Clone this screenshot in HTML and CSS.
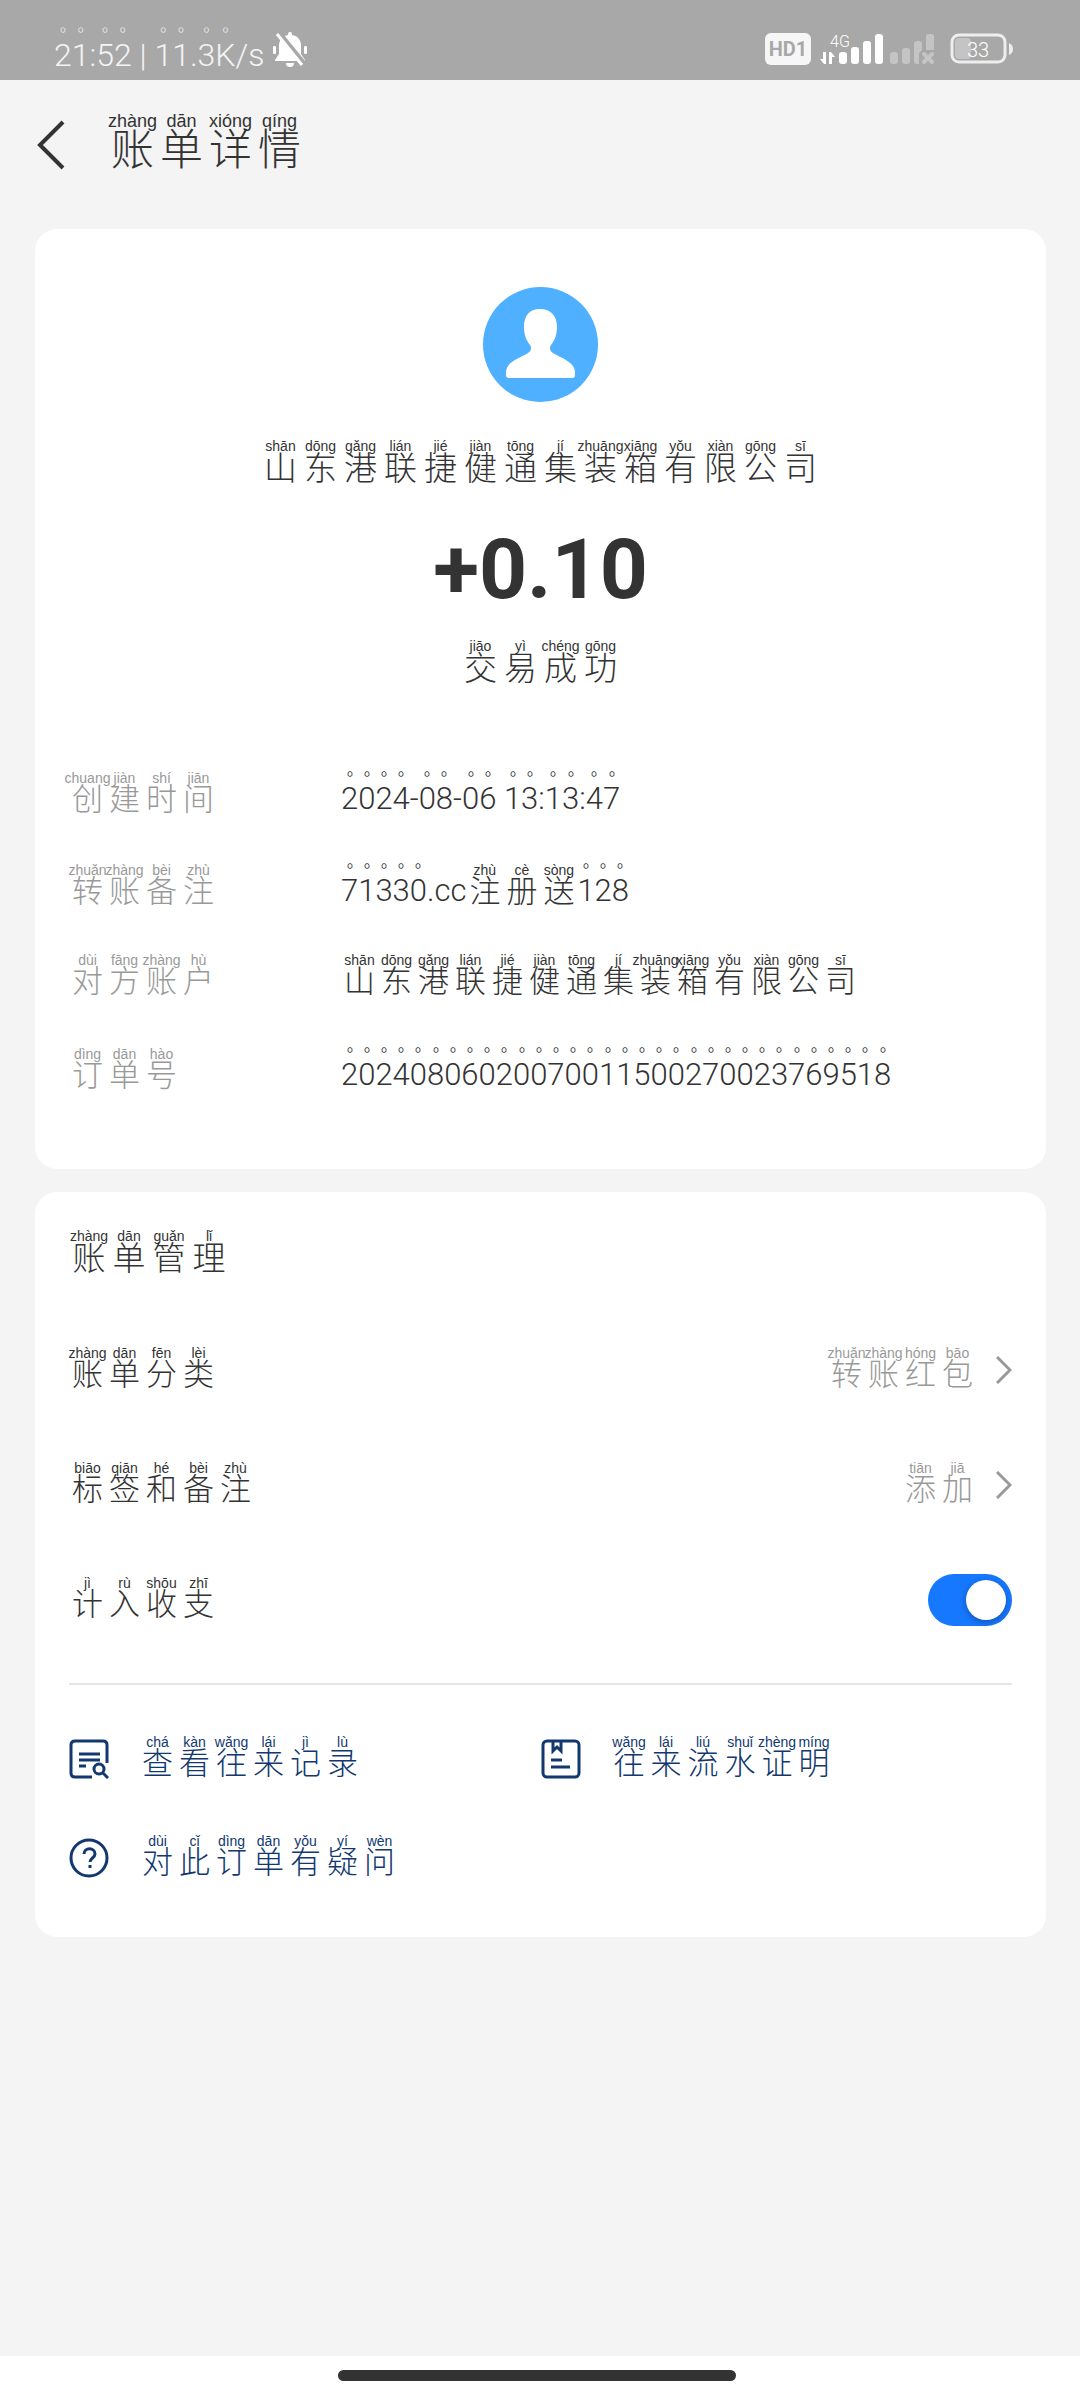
FILE: index.html
```
<!DOCTYPE html>
<html lang="zh-CN">
<head>
  <meta charset="UTF-8">
  <meta name="viewport" content="width=device-width, initial-scale=1.0">
  <title>账单详情</title>
  <link rel="stylesheet" href="styles.css">
</head>
<body>
  <div class="status-bar">
    <div class="status-left">
      <span class="status-text"><span class="num">21</span>:<span class="num">52</span> | <span class="num">11</span>.<span class="num">3K</span>/s</span>
      <svg class="icon-bell" width="36" height="36" viewBox="0 0 36 36" fill="#fff">
        <path d="M18 1a2 2 0 0 1 2 2v1c6 1 9 5 9 11v8l4 6v1H3v-1l4-6v-8C7 9 10 5 16 4V3a2 2 0 0 1 2-2z"/>
        <path d="M14 32h8a4 4 0 0 1-8 0z"/>
        <rect x="1" y="15" width="3" height="8" rx="1"/>
        <rect x="32" y="15" width="3" height="8" rx="1"/>
        <path d="M7 1l26 32" stroke="#a8a8a8" stroke-width="4"/>
        <path d="M5 3l25 31" stroke="#fff" stroke-width="3"/>
      </svg>
    </div>
    <div class="status-right">
      <span class="hd-badge">HD1</span>
      <svg class="icon-signal" width="116" height="34" viewBox="0 0 116 34" fill="#fff">
        <text class="net-type" x="10" y="15">4G</text>
        <path d="M6 20v12H4l-4-5h3v-7zM9 32V20h2l4 5h-3v7z"/>
        <rect x="19" y="20" width="8" height="12" rx="3"/>
        <rect x="31" y="15" width="8" height="17" rx="3"/>
        <rect x="43" y="9" width="8" height="23" rx="3"/>
        <rect x="55" y="2" width="8" height="30" rx="3"/>
        <g fill="#c4c4c4">
          <rect x="70" y="20" width="8" height="12" rx="3"/>
          <rect x="82" y="16" width="8" height="16" rx="3"/>
          <path d="M94 12a3 3 0 0 1 3-3h2a3 3 0 0 1 3 3v6l-3 3v11h-2a3 3 0 0 1-3-3z"/>
          <path d="M106 5a3 3 0 0 1 3-3h2a3 3 0 0 1 3 3v13h-8z"/>
        </g>
        <path d="M104 22l8 8M112 22l-8 8" stroke="#c4c4c4" stroke-width="4" stroke-linecap="round"/>
      </svg>
      <svg class="icon-battery" width="64" height="32" viewBox="0 0 64 32">
        <rect x="2" y="2" width="53" height="27" rx="7" fill="none" stroke="#eee" stroke-width="3"/>
        <rect x="5" y="5" width="16" height="21" rx="4" fill="#c4c4c4"/>
        <path d="M59 10q4 2 4 6t-4 6z" fill="#eee"/>
        <text class="battery-text" x="28" y="24" text-anchor="middle">33</text>
      </svg>
    </div>
  </div>

  <header class="header">
    <a class="back" href="#" aria-label="返回">
      <svg width="30" height="50" viewBox="0 0 30 50" fill="none" stroke="#333" stroke-width="4">
        <path d="M27 2L4 25l23 23"/>
      </svg>
    </a>
    <h1 class="py py-title"><ruby>账<rt>zhàng</rt></ruby><ruby>单<rt>dān</rt></ruby><ruby>详<rt>xióng</rt></ruby><ruby>情<rt>qíng</rt></ruby></h1>
  </header>

  <main>
    <section class="card summary">
      <svg class="avatar" width="115" height="115" viewBox="0 0 115 115">
        <circle cx="57.5" cy="57.5" r="57.5" fill="#4eb0ff"/>
        <path fill="#fff" d="M57 22c11 0 17 7 17 18 0 9-3 14-6 18-2 3-1 6 2 8 8 5 22 9 22 19v3q0 3-3 3H26q-3 0-3-3v-3c0-10 14-14 22-19 3-2 4-5 2-8-3-4-6-9-6-18 0-11 5-18 16-18z"/>
      </svg>
      <div class="py py-large payee"><ruby>山<rt>shān</rt></ruby><ruby>东<rt>dōng</rt></ruby><ruby>港<rt>gǎng</rt></ruby><ruby>联<rt>lián</rt></ruby><ruby>捷<rt>jié</rt></ruby><ruby>健<rt>jiàn</rt></ruby><ruby>通<rt>tōng</rt></ruby><ruby>集<rt>jí</rt></ruby><ruby>装<rt>zhuāng</rt></ruby><ruby>箱<rt>xiāng</rt></ruby><ruby>有<rt>yǒu</rt></ruby><ruby>限<rt>xiàn</rt></ruby><ruby>公<rt>gōng</rt></ruby><ruby>司<rt>sī</rt></ruby></div>
      <div class="amount">+0.10</div>
      <div class="py py-large state"><ruby>交<rt>jiāo</rt></ruby><ruby>易<rt>yì</rt></ruby><ruby>成<rt>chéng</rt></ruby><ruby>功<rt>gōng</rt></ruby></div>

      <dl class="details">
        <div class="detail">
          <dt class="py"><ruby>创<rt>chuang</rt></ruby><ruby>建<rt>jiàn</rt></ruby><ruby>时<rt>shí</rt></ruby><ruby>间<rt>jiān</rt></ruby></dt>
          <dd class="py"><span class="digits"><span class="num">2024</span>-<span class="num">08</span>-<span class="num">06</span> <span class="num">13</span>:<span class="num">13</span>:<span class="num">47</span></span></dd>
        </div>
        <div class="detail">
          <dt class="py"><ruby>转<rt>zhuǎn</rt></ruby><ruby>账<rt>zhàng</rt></ruby><ruby>备<rt>bèi</rt></ruby><ruby>注<rt>zhù</rt></ruby></dt>
          <dd class="py"><span class="digits"><span class="num">71330</span>.cc</span><ruby>注<rt>zhù</rt></ruby><ruby>册<rt>cè</rt></ruby><ruby>送<rt>sòng</rt></ruby><span class="digits num">128</span></dd>
        </div>
        <div class="detail">
          <dt class="py"><ruby>对<rt>dùi</rt></ruby><ruby>方<rt>fāng</rt></ruby><ruby>账<rt>zhàng</rt></ruby><ruby>户<rt>hù</rt></ruby></dt>
          <dd class="py"><ruby>山<rt>shān</rt></ruby><ruby>东<rt>dōng</rt></ruby><ruby>港<rt>gǎng</rt></ruby><ruby>联<rt>lián</rt></ruby><ruby>捷<rt>jié</rt></ruby><ruby>健<rt>jiàn</rt></ruby><ruby>通<rt>tōng</rt></ruby><ruby>集<rt>jí</rt></ruby><ruby>装<rt>zhuāng</rt></ruby><ruby>箱<rt>xiāng</rt></ruby><ruby>有<rt>yǒu</rt></ruby><ruby>限<rt>xiàn</rt></ruby><ruby>公<rt>gōng</rt></ruby><ruby>司<rt>sī</rt></ruby></dd>
        </div>
        <div class="detail">
          <dt class="py"><ruby>订<rt>dìng</rt></ruby><ruby>单<rt>dān</rt></ruby><ruby>号<rt>hào</rt></ruby></dt>
          <dd class="py"><span class="digits num">20240806020070011500270023769518</span></dd>
        </div>
      </dl>
    </section>

    <section class="card manage">
      <h2 class="py py-large"><ruby>账<rt>zhàng</rt></ruby><ruby>单<rt>dān</rt></ruby><ruby>管<rt>guǎn</rt></ruby><ruby>理<rt>lǐ</rt></ruby></h2>
      <div class="rows">
        <a class="row" href="#">
          <span class="py"><ruby>账<rt>zhàng</rt></ruby><ruby>单<rt>dān</rt></ruby><ruby>分<rt>fēn</rt></ruby><ruby>类<rt>lèi</rt></ruby></span>
          <span class="row-value">
            <span class="py"><ruby>转<rt>zhuǎn</rt></ruby><ruby>账<rt>zhàng</rt></ruby><ruby>红<rt>hóng</rt></ruby><ruby>包<rt>bāo</rt></ruby></span>
            <svg width="16" height="28" viewBox="0 0 16 28" fill="none" stroke="#999" stroke-width="3"><path d="M1 1l13 13L1 27"/></svg>
          </span>
        </a>
        <a class="row" href="#">
          <span class="py"><ruby>标<rt>biāo</rt></ruby><ruby>签<rt>qiān</rt></ruby><ruby>和<rt>hé</rt></ruby><ruby>备<rt>bèi</rt></ruby><ruby>注<rt>zhù</rt></ruby></span>
          <span class="row-value">
            <span class="py"><ruby>添<rt>tiān</rt></ruby><ruby>加<rt>jiā</rt></ruby></span>
            <svg width="16" height="28" viewBox="0 0 16 28" fill="none" stroke="#999" stroke-width="3"><path d="M1 1l13 13L1 27"/></svg>
          </span>
        </a>
        <div class="row">
          <label class="py" for="countIn"><ruby>计<rt>jì</rt></ruby><ruby>入<rt>rù</rt></ruby><ruby>收<rt>shōu</rt></ruby><ruby>支<rt>zhī</rt></ruby></label>
          <input class="switch" type="checkbox" id="countIn" checked>
        </div>
      </div>
      <nav class="actions">
        <a class="action" href="#">
          <svg width="40" height="40" viewBox="0 0 40 40" fill="none" stroke="#12386f" stroke-width="3">
            <path d="M23 38H6q-4 0-4-4V6q0-4 4-4h28q4 0 4 4v18M10 15h21M10 21h21M10 27h7"/>
            <circle cx="30" cy="30" r="5"/>
            <path d="M34 34l5 5"/>
          </svg>
          <span class="py"><ruby>查<rt>chá</rt></ruby><ruby>看<rt>kàn</rt></ruby><ruby>往<rt>wǎng</rt></ruby><ruby>来<rt>lái</rt></ruby><ruby>记<rt>jì</rt></ruby><ruby>录<rt>lù</rt></ruby></span>
        </a>
        <a class="action" href="#">
          <svg width="40" height="40" viewBox="0 0 40 40" fill="none" stroke="#12386f" stroke-width="3">
            <rect x="2" y="2" width="36" height="36" rx="4"/>
            <path d="M12 2v10l4-4 4 4V2M10 21h11M10 28h19"/>
          </svg>
          <span class="py"><ruby>往<rt>wǎng</rt></ruby><ruby>来<rt>lái</rt></ruby><ruby>流<rt>liú</rt></ruby><ruby>水<rt>shuǐ</rt></ruby><ruby>证<rt>zhèng</rt></ruby><ruby>明<rt>míng</rt></ruby></span>
        </a>
        <a class="action" href="#">
          <svg width="40" height="40" viewBox="0 0 40 40" fill="none" stroke="#12386f" stroke-width="3">
            <circle cx="20" cy="20" r="18"/>
            <path d="M15 16c0-7 11-7 11 0 0 4-5 4-5 8M21 27v3"/>
          </svg>
          <span class="py"><ruby>对<rt>dùi</rt></ruby><ruby>此<rt>cǐ</rt></ruby><ruby>订<rt>dìng</rt></ruby><ruby>单<rt>dān</rt></ruby><ruby>有<rt>yǒu</rt></ruby><ruby>疑<rt>yí</rt></ruby><ruby>问<rt>wèn</rt></ruby></span>
        </a>
      </nav>
    </section>
  </main>

  <footer class="home-bar"><div class="home-pill"></div></footer>
</body>
</html>
```

FILE: styles.css
```
* {
  box-sizing: border-box;
}
body {
  margin: 0;
  min-height: 100vh;
  display: flex;
  flex-direction: column;
  background-color: #f4f4f4;
  color: #333;
  font-family: Roboto, "Noto Sans CJK SC", sans-serif;
  font-weight: 300;
}
a {
  color: inherit;
  text-decoration: none;
}
svg {
  display: block;
  flex-shrink: 0;
}

/* hanzi with pinyin on top */
.py {
  display: flex;
  align-items: center;
  margin: 0 0 7px;
  font-family: "Noto Sans CJK SC", sans-serif;
  font-size: 31px;
  font-weight: 300;
  line-height: 26px;
  white-space: nowrap;
}
ruby {
  display: flex;
  flex-direction: column-reverse;
  align-items: center;
  width: 37px;
}
rt {
  display: block;
  font-family: "Liberation Sans", sans-serif;
  font-size: 14px;
  font-weight: 400;
  line-height: 12px;
}
.py-large {
  font-size: 33px;
  line-height: 29px;
}
.py-large ruby {
  width: 40px;
}
.py-title {
  margin-bottom: 12px;
  font-size: 43px;
  line-height: 36px;
}
.py-title ruby {
  width: 49px;
}
.py-title rt {
  font-size: 18px;
  line-height: 14px;
}
.digits {
  padding-top: 10px;
  font-family: Roboto, sans-serif;
  font-size: 31px;
  line-height: 74px;
}
/* small ring above every digit */
.num {
  text-emphasis: "｡";
  text-emphasis-position: over right;
}

.status-bar {
  height: 80px;
  padding: 18px 66px 0 54px;
  display: flex;
  align-items: center;
  justify-content: space-between;
  background-color: #a8a8a8;
  color: #f4f4f4;
}
.status-left,
.status-right {
  display: flex;
  align-items: center;
}
.status-left {
  gap: 8px;
}
.status-text {
  padding-top: 6px;
  font-size: 32px;
  line-height: 76px;
}
.hd-badge {
  width: 46px;
  margin-right: 9px;
  border-radius: 6px;
  background-color: #f6f6f6;
  color: #a8a8a8;
  font-size: 20px;
  font-weight: 700;
  line-height: 32px;
  text-align: center;
}
.icon-signal {
  margin-right: 14px;
}
.net-type {
  font-size: 16px;
}
.battery-text {
  font-size: 20px;
  fill: #fff;
}

.header {
  display: flex;
  align-items: center;
  gap: 42px;
  height: 149px;
  padding: 0 36px 20px;
}

.card {
  margin: 0 34px 23px 35px;
  border-radius: 22px;
  background-color: #fff;
}
.summary {
  display: flex;
  flex-direction: column;
  align-items: center;
  padding: 58px 34px 55px;
}
.payee {
  margin-top: 38px;
}
.amount {
  margin-top: 36px;
  font-size: 84px;
  font-weight: 700;
  line-height: 92px;
}
.state {
  margin-top: 24px;
}
.details {
  width: 100%;
  margin: 58px 0 0;
}
.detail {
  display: grid;
  grid-template-columns: 272px 1fr;
  align-items: center;
  height: 92px;
}
.detail dt {
  color: #999;
}

.manage {
  padding: 38px 34px 30px;
}
.rows {
  margin-top: 41px;
  padding-bottom: 26px;
  border-bottom: 2px solid #e5e5e5;
}
.row {
  display: flex;
  align-items: center;
  justify-content: space-between;
  height: 115px;
}
.row-value {
  display: flex;
  align-items: center;
  gap: 20px;
  color: #999;
}
.switch {
  appearance: none;
  display: flex;
  align-items: center;
  justify-content: flex-end;
  width: 84px;
  height: 52px;
  margin: 0;
  padding: 6px;
  border-radius: 26px;
  background-color: #ccc;
  cursor: pointer;
}
.switch::before {
  content: "";
  width: 40px;
  height: 40px;
  border-radius: 50%;
  background-color: #fff;
  box-shadow: 0 2px 6px rgba(0, 0, 0, 0.3);
}
.switch:checked {
  background-color: #1677ff;
}
.switch:not(:checked) {
  justify-content: flex-start;
}
.actions {
  display: grid;
  grid-template-columns: 1fr 1fr;
  padding-top: 24px;
  color: #12386f;
}
.action {
  display: flex;
  align-items: center;
  gap: 30px;
  height: 99px;
}

.home-bar {
  display: flex;
  justify-content: center;
  height: 44px;
  margin-top: auto;
  padding: 14px 6px 0 0;
  background-color: #fff;
}
.home-pill {
  width: 37%;
  height: 11px;
  border-radius: 6px;
  background-color: #333;
}
```
